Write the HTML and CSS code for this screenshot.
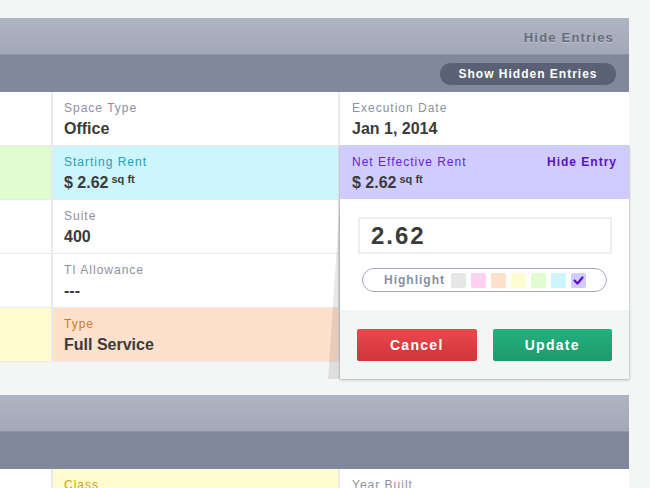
FILE: index.html
```html
<!DOCTYPE html>
<html lang="en">
<head>
<meta charset="utf-8">
<title>Entries</title>
<link rel="stylesheet" href="styles.css">
</head>
<body>
<section class="panel first">
  <div class="head-top"><span class="hide-entries">Hide Entries</span></div>
  <div class="head-sub"><button class="pill-btn">Show Hidden Entries</button></div>
  <div class="grid">
    <div class="cell"></div>
    <div class="cell"><div class="label">Space Type</div><div class="value">Office</div></div>
    <div class="cell"><div class="label">Execution Date</div><div class="value">Jan 1, 2014</div></div>

    <div class="cell green"></div>
    <div class="cell cyan"><div class="label teal">Starting Rent</div><div class="value">$ 2.62<sup>sq ft</sup></div></div>
    <div class="cell anchor">
      <div class="popup">
        <svg class="tail" width="12" height="180" viewBox="0 0 12 180"><polygon points="12,0 12,180 0,180" fill="rgba(0,0,0,0.09)"/></svg>
        <div class="pop-head">
          <div class="row-line"><span class="label purple-text">Net Effective Rent</span><a class="hide-entry">Hide Entry</a></div>
          <div class="value">$ 2.62<sup>sq ft</sup></div>
        </div>
        <div class="pop-body">
          <div class="input">2.62</div>
          <div class="highlight">
            <span class="hl-text">Highlight</span>
            <span class="sw sw-grey"></span>
            <span class="sw sw-pink"></span>
            <span class="sw sw-peach"></span>
            <span class="sw sw-yellow"></span>
            <span class="sw sw-green"></span>
            <span class="sw sw-cyan"></span>
            <span class="sw sw-purple"><svg width="15" height="15" viewBox="0 0 15 15"><polyline points="3.5,7.5 6.5,10.5 11.5,4.5" fill="none" stroke="#5a10c8" stroke-width="2.2" stroke-linecap="round" stroke-linejoin="round"/></svg></span>
          </div>
        </div>
        <div class="pop-foot">
          <button class="btn cancel">Cancel</button>
          <button class="btn update">Update</button>
        </div>
      </div>
    </div>

    <div class="cell"></div>
    <div class="cell"><div class="label">Suite</div><div class="value">400</div></div>
    <div class="cell"></div>

    <div class="cell"></div>
    <div class="cell"><div class="label">TI Allowance</div><div class="value">---</div></div>
    <div class="cell"></div>

    <div class="cell yellow"></div>
    <div class="cell peach"><div class="label orange">Type</div><div class="value">Full Service</div></div>
    <div class="cell"></div>
  </div>
</section>

<section class="panel second">
  <div class="head-top"></div>
  <div class="head-sub"></div>
  <div class="grid">
    <div class="cell"></div>
    <div class="cell yellow"><div class="label ochre">Class</div></div>
    <div class="cell"><div class="label">Year Built</div></div>
  </div>
</section>
</body>
</html>
```
FILE: styles.css
```css
html, body {
  margin: 0;
  padding: 0;
}
body {
  background: #f4f5f5;
  font-family: "Liberation Sans", Arial, sans-serif;
  width: 650px;
  height: 488px;
  overflow: hidden;
}
.panel {
  width: 629px;
}
.panel.first {
  margin-top: 18px;
}
.panel.second {
  margin-top: 33px;
}
.head-top {
  height: 36px;
  background: linear-gradient(#afb4c1, #a3a8b9);
  display: flex;
  align-items: center;
  justify-content: flex-end;
  padding-right: 15px;
}
.hide-entries {
  font-size: 13px;
  font-weight: bold;
  letter-spacing: 1.2px;
  color: #656b7b;
  text-shadow: 0 1px 0 rgba(255,255,255,0.35);
  margin-top: 2px;
}
.head-sub {
  height: 38px;
  box-sizing: border-box;
  border-top: 1px solid #8b93a4;
  background: #7f899b;
  display: flex;
  align-items: center;
  justify-content: flex-end;
  padding-right: 13px;
}
.pill-btn {
  height: 22px;
  width: 176px;
  border: none;
  border-radius: 11px;
  background: #5a6174;
  color: #fff;
  font-family: inherit;
  font-size: 12px;
  font-weight: bold;
  letter-spacing: 1px;
  padding: 0;
}
.grid {
  display: grid;
  grid-template-columns: 51px 285px 289px;
  grid-auto-rows: 53px;
  column-gap: 2px;
  row-gap: 1px;
  background: #e8eaed;
  padding-bottom: 1px;
}
.cell {
  background: #fff;
  padding: 9px 12px 0 11px;
  box-sizing: border-box;
}
.cell:nth-child(3n) {
  padding-left: 12px;
}
.green { background: #e0fdd0; }
.cyan { background: #ccf5fc; }
.yellow { background: #fffdcf; }
.peach { background: #fde1cc; }
.label {
  font-size: 12px;
  line-height: 14px;
  letter-spacing: 1px;
  color: #8b91a1;
}
.teal { color: #2a9fb6; }
.orange { color: #d2772c; }
.ochre { color: #c9a21a; }
.purple-text { color: #6a22cf; }
.value {
  margin-top: 4px;
  font-size: 16px;
  line-height: 20px;
  font-weight: bold;
  color: #3b3b3b;
}
.value sup {
  font-size: 11px;
  margin-left: 3px;
  vertical-align: 5px;
  line-height: 0;
}
.anchor {
  position: relative;
  padding: 0;
  background: #fff;
}
.popup {
  position: absolute;
  top: 0;
  left: 0;
  width: 289px;
  z-index: 2;
  background: #fff;
  box-shadow: 0 0 0 1px rgba(0,0,0,0.06), 0 1px 3px rgba(0,0,0,0.22);
}
.tail {
  position: absolute;
  left: -12px;
  top: 53px;
}
.pop-head {
  height: 53px;
  box-sizing: border-box;
  background: #d1ccff;
  padding: 9px 12px 0 12px;
}
.row-line {
  display: flex;
  justify-content: space-between;
  align-items: center;
}
.hide-entry {
  font-size: 12px;
  line-height: 14px;
  font-weight: bold;
  letter-spacing: 1px;
  color: #5b10c7;
}
.pop-body {
  padding: 17px 17px 18px 18px;
  background: #fff;
  border-top: 1px solid #ffffff;
}
.input {
  height: 37px;
  box-sizing: border-box;
  border: 2px solid #eceeef;
  padding-left: 11px;
  font-size: 24px;
  line-height: 33px;
  font-weight: bold;
  letter-spacing: 2px;
  color: #3b3b3b;
}
.highlight {
  margin: 14px 5px 0 4px;
  height: 24px;
  box-sizing: border-box;
  border: 1.5px solid #a2a8b7;
  border-radius: 12px;
  display: flex;
  align-items: center;
  padding-left: 21px;
}
.hl-text {
  font-size: 12px;
  font-weight: bold;
  letter-spacing: 1px;
  color: #878ea3;
  margin-right: 6px;
}
.sw {
  width: 15px;
  height: 15px;
  border-radius: 2px;
  margin-right: 5px;
  display: block;
}
.sw svg { display: block; }
.sw-grey { background: #e6e6e6; }
.sw-pink { background: #ffd0f1; }
.sw-peach { background: #fde1cc; }
.sw-yellow { background: #fffdcf; }
.sw-green { background: #e0fdd0; }
.sw-cyan { background: #ccf5fc; }
.sw-purple { background: #d1ccff; }
.pop-foot {
  background: #f4f5f5;
  padding: 19px 17px 18px 17px;
  display: flex;
  gap: 16px;
}
.btn {
  width: 120px;
  height: 32px;
  border: none;
  border-radius: 2px;
  color: #fff;
  font-family: inherit;
  font-size: 14px;
  font-weight: bold;
  letter-spacing: 1.3px;
  padding: 0;
}
.cancel {
  background: linear-gradient(#e9494c, #cf3539);
}
.update {
  background: linear-gradient(#23b17f, #1e9a6c);
}
```
